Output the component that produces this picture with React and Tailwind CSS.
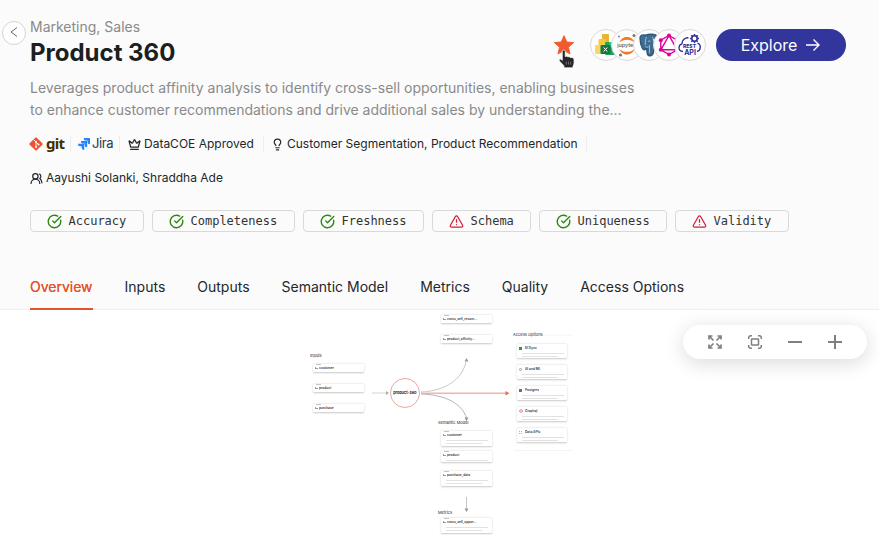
import React from "react";
import { CircleCheckBig, TriangleAlert, Crown, Lightbulb, UsersRound } from "lucide-react";

const circle = "flex size-8 shrink-0 items-center justify-center rounded-full border border-[#d9d9d9] bg-white";

function PowerBi() {
  return (
    <svg width="22" height="24" viewBox="0 0 22 24">
      <rect x="7" y="1" width="7" height="20" rx="1" fill="#e8b62d" />
      <rect x="3.500" y="6" width="7" height="15" rx="1" fill="#f5c945" />
      <rect x="0" y="12" width="7" height="9" rx="1" fill="#f8d766" />
      <rect x="10" y="9" width="10" height="13" rx="1" fill="#21a366" />
      <rect x="14" y="9" width="6" height="5" fill="#33c481" />
      <rect x="5.500" y="12" width="10" height="9" rx="1" fill="#107c41" />
      <path d="M8.700 14.500l3.600 4M12.300 14.500l-3.600 4" stroke="#fff" strokeWidth="1" />
    </svg>
  );
}

function Jupyter() {
  return (
    <svg width="26" height="26" viewBox="0 0 26 26">
      <path d="M5.500 10.500C7 6.500 10 5 13 5s6 1.500 7.500 5.500C18.500 8.500 16 7.700 13 7.700s-5.500.8-7.500 2.800z" fill="#f37726" />
      <path d="M5.500 17C7 21 10 22.500 13 22.500s6-1.500 7.500-5.500c-2 2-4.500 2.800-7.500 2.800S7.500 19 5.500 17z" fill="#f37726" />
      <circle cx="20" cy="3.500" r="1.500" fill="#767677" />
      <circle cx="5" cy="4.500" r="0.900" fill="#767677" />
      <circle cx="6.500" cy="23" r="1.600" fill="#767677" />
      <text x="12.300" y="15.300" textAnchor="middle" fontSize="5.400" fontFamily="Inter, sans-serif" fontWeight="500" fill="#555">jupyter</text>
    </svg>
  );
}

function Postgres() {
  return (
    <svg width="22" height="24" viewBox="0 0 22 24">
      <path d="M2 5C2 2 5 1.500 8 2.200 10 1 15 .8 17.500 2 21 3.500 20.500 7 19 10.500c-.8 2-1.800 3.500-2.400 4.500 1 .6 2.500.2 3.600 0-.8 1.700-2.500 2.400-4.500 2.200-.2 2.500-.5 5.300-3.200 5.600-3 .3-3.400-1.800-3.500-4.500l-.4-3C7 17 5.500 17.500 4.500 15.500 3 12.500 2 8 2 5z" fill="#3f6e95" stroke="#2f5676" strokeWidth="1.400" />
      <path d="M8.500 4C7 6 7.500 10 7.300 12M14 4c2.300 2 2.500 5 1.500 8l1.200 3M10 8.500c1-.8 2.200-.6 2.500.5M11.500 12v8M7.500 13c.5 1.500 2 1.500 3 1" fill="none" stroke="#c9d8e4" strokeWidth=".7" />
      <circle cx="15.500" cy="7" r=".8" fill="#fff" />
    </svg>
  );
}

function GraphQl({ size = 26 }) {
  return (
    <svg width={size} height={size} viewBox="0 0 26 26" fill="none" stroke="#e10098" strokeWidth="1.400">
      <path d="M13 3.500l8.200 4.700v9.600L13 22.500l-8.200-4.700V8.200zM13 3.500L4.800 17.800h16.400z" />
      <g fill="#e10098" stroke="none">
        <circle cx="13" cy="3.500" r="2" />
        <circle cx="21.200" cy="8.200" r="2" />
        <circle cx="21.200" cy="17.800" r="2" />
        <circle cx="13" cy="22.500" r="2" />
        <circle cx="4.800" cy="17.800" r="2" />
        <circle cx="4.800" cy="8.200" r="2" />
      </g>
    </svg>
  );
}

function RestApi() {
  return (
    <svg width="26" height="26" viewBox="0 0 26 26">
      <path d="M6 19.500C3 19.500 1.800 17.500 2 15.500c.2-2 1.500-3.500 3-3.700C5 8 8 5.500 11.500 5.800M20.500 11c2 .8 3 2.300 2.800 4.400-.2 2.300-1.300 3.700-3.300 4.100" fill="none" stroke="#2d2e9b" strokeWidth="1.300" />
      <circle cx="17.500" cy="6.500" r="2.700" fill="none" stroke="#2d2e9b" strokeWidth="1.500" />
      <path d="M17.500 2v1.800M17.500 9.200V11M13 6.500h1.800M20.200 6.500H22M14.300 3.300l1.200 1.200M19.500 8.500l1.200 1.200M20.700 3.300l-1.200 1.200M14.300 9.700l1.200-1.200" stroke="#2d2e9b" strokeWidth="1.500" />
      <text x="12.500" y="15.900" textAnchor="middle" fontSize="5" fontWeight="800" fontFamily="Inter, sans-serif" fill="#2d2e9b">REST</text>
      <text x="13" y="22.500" textAnchor="middle" fontSize="7" fontWeight="700" fontFamily="Inter, sans-serif" fill="#2d2e9b">API</text>
    </svg>
  );
}

function Favourite() {
  return (
    <div className="relative mt-[5px] size-[22px]">
      <svg width="22" height="22" viewBox="0 0 24 24">
        <path d="M12 1.800l3 6.900 7.600.7-5.700 5 1.700 7.400L12 17.900l-6.600 3.900 1.700-7.400-5.700-5 7.600-.7z" fill="#f05a2c" stroke="#f05a2c" strokeLinejoin="round" />
      </svg>
      <svg className="absolute top-[15px] left-[5px]" width="18" height="20" viewBox="0 0 17 19">
        <path d="M4 2.200C4 .6 6.800.6 6.800 2.200v5c1-.7 2.200-.4 2.600.4 1-.6 2-.2 2.400.6 1.500-.5 3.400.2 3.400 1.900v3.200c0 1.200-.7 2-1 3v1.600H5.600v-2L1.300 11.500c-.9-1.400.6-2.500 1.800-1.500l.9.800z" fill="#262626" stroke="#fff" strokeWidth=".7" />
        <path d="M7.800 12v2.800M9.900 12v2.800M12 12v2.800" stroke="#999" strokeWidth=".6" />
      </svg>
    </div>
  );
}

function GitLogo() {
  return (
    <div className="flex w-[34px] items-center">
      <svg className="-ml-[2px] shrink-0" width="16" height="16" viewBox="0 0 16 16">
        <rect x="3" y="3" width="10" height="10" rx="1" fill="#f05033" transform="rotate(45 8 8)" />
        <path d="M5.800 3.800L8 6v5M8 6l2.300 2.300" stroke="#fff" strokeWidth=".9" fill="none" />
        <circle cx="8" cy="5.800" r="1" fill="#fff" />
        <circle cx="8" cy="11" r="1" fill="#fff" />
        <circle cx="10.500" cy="8.400" r="1" fill="#fff" />
      </svg>
      <span className="-mt-[3px] ml-[2px] font-['Noto_Sans',sans-serif] text-[15px] leading-[18px] font-bold tracking-[-0.700px] text-[#413000]">git</span>
    </div>
  );
}

function JiraLogo() {
  return (
    <div className="flex w-[35px] items-center">
      <svg className="-ml-px shrink-0" width="12" height="12" viewBox="0 0 24 24">
        <path d="M11.500 0H23a1 1 0 0 1 1 1v11.500a5 5 0 0 1-5-5V5.200h-2.200a5 5 0 0 1-5.300-5.200z" fill="#2684ff" />
        <path d="M5.800 5.800h11.500a1 1 0 0 1 1 1v11.500a5 5 0 0 1-5.200-5V11h-2.200a5 5 0 0 1-5.100-5.200z" fill="#2684ff" />
        <path d="M0 11.500h11.500a1 1 0 0 1 1 1V24a5 5 0 0 1-5.200-5v-2.300H5.200A5 5 0 0 1 0 11.500z" fill="#2684ff" />
      </svg>
      <span className="ml-[2px] text-[13px] tracking-[-0.400px] text-[#253858]">Jira</span>
    </div>
  );
}

const Divider = () => <span className="h-4 w-px bg-[#eeeeee]" />;

const checks = [
  ["Accuracy", true, "w-[114px]"],
  ["Completeness", true, "w-[143px]"],
  ["Freshness", true, "w-[121px]"],
  ["Schema", false, "w-[99px]"],
  ["Uniqueness", true, "w-[128px]"],
  ["Validity", false, "w-[114px]"],
];

const tabs = ["Overview", "Inputs", "Outputs", "Semantic Model", "Metrics", "Quality", "Access Options"];

function Card({ className, label, lines = 0, icon }) {
  return (
    <div className={"absolute rounded-[1px] bg-white shadow-[0_0.500px_2px_rgba(0,0,0,0.22)] " + className}>
      {!icon && <div className="absolute top-0 left-[3px] h-px w-[5px] bg-[#c4c4c4]" />}
      <div className="flex h-[8px] items-center gap-[1.500px] pl-[2px] text-[#333333]">
        {icon || <span className="size-[2.500px] shrink-0 border-b border-l border-[#999999]" />}
        <span className="w-0 origin-left scale-[0.250] text-[13px] leading-[16px] font-semibold whitespace-nowrap">{label}</span>
      </div>
      {lines > 0 && <div className="mt-px ml-[5px] h-px w-[42px] bg-[#e2e2e2]" />}
      {lines > 1 && <div className="mt-[2px] ml-[5px] h-px w-[36px] bg-[#e2e2e2]" />}
    </div>
  );
}

const Dot = ({ className }) => <span className={"size-[3px] shrink-0 " + className} />;

const heading = "absolute origin-top-left scale-[0.250] text-[16px] leading-[20px] whitespace-nowrap text-[#222222] ";

function Diagram() {
  return (
    <div className="absolute inset-0">
      <svg className="absolute inset-0" width="879" height="225" viewBox="0 310 879 225" fill="none">
        <path d="M372 393h15" stroke="#c8c8c8" strokeWidth=".8" />
        <path d="M386 391l3 2-3 2z" fill="#aaa" />
        <path d="M421 392C446 391 462 379 466 362" stroke="#c8c8c8" strokeWidth="1" />
        <path d="M421 394C447 395 462 404 466.500 418" stroke="#b4b4b4" strokeWidth="1" />
        <path d="M466.500 497v13" stroke="#c4c4c4" strokeWidth="1" />
        <path d="M464.500 361.500l2-3.500 2 3.500zM464.500 417.500l2 4 2-4zM464.500 508.500l2 3.500 2-3.500z" fill="#999" />
        <path d="M421 393.200h86" stroke="#f5b3a5" strokeWidth="1.500" />
        <path d="M505.500 390.900l4 2.300-4 2.300z" fill="#ee6a50" />
        <path d="M541 335h32M514 450.500h59" stroke="#f1f1f1" strokeWidth=".8" />
      </svg>
      <div className="absolute top-[68px] left-[390px] flex size-[30px] items-center justify-center rounded-full border border-[#eba79d] bg-white">
        <span className="shrink-0 scale-[0.250] text-[15px] font-bold whitespace-nowrap text-[#222222]">product-360</span>
      </div>
      <span className={heading + "top-[43px] left-[310px]"}>Inputs</span>
      <span className={heading + "top-[110px] left-[438px]"}>Semantic Model</span>
      <span className={heading + "top-[200px] left-[438px]"}>Metrics</span>
      <span className={heading + "top-[22px] left-[513px]"}>Access Options</span>
      <Card className="top-[54px] left-[313px] h-[8px] w-[51px]" label="customer" />
      <Card className="top-[74px] left-[313px] h-[8px] w-[51px]" label="product" />
      <Card className="top-[94px] left-[313px] h-[8px] w-[51px]" label="purchase" />
      <Card className="top-[5px] left-[441px] h-[8px] w-[51px]" label="cross_sell_recom..." />
      <Card className="top-[25px] left-[441px] h-[8px] w-[51px]" label="product_affinity..." />
      <Card className="top-[121px] left-[441px] h-[15px] w-[51px]" label="customer" lines={2} />
      <Card className="top-[141px] left-[441px] h-[11px] w-[51px]" label="product" lines={1} />
      <Card className="top-[161px] left-[441px] h-[15px] w-[51px]" label="purchase_data" lines={2} />
      <Card className="top-[208px] left-[441px] h-[15px] w-[51px]" label="cross_sell_oppor..." lines={2} />
      <Card className="top-[34px] left-[517px] h-[14px] w-[50px]" label="BI Sync" lines={2} icon={<Dot className="mr-[1px] bg-[#3c9a35]" />} />
      <Card className="top-[55px] left-[517px] h-[14px] w-[50px]" label="AI and ML" lines={2} icon={<Dot className="mr-[1px] rounded-full border-[0.500px] border-[#999999]" />} />
      <Card className="top-[76px] left-[517px] h-[14px] w-[50px]" label="Postgres" lines={2} icon={<Dot className="mr-[1px] bg-[#55788f]" />} />
      <Card className="top-[97px] left-[517px] h-[14px] w-[50px]" label="Graphql" lines={2} icon={<GraphQl size={4} />} />
      <Card className="top-[118px] left-[517px] h-[14px] w-[50px]" label="Data APIs" lines={2} icon={<Dot className="mr-[1px] border border-dotted border-[#aaaacc]" />} />
    </div>
  );
}

function ZoomBar() {
  return (
    <div className="absolute top-[15px] left-[683px] flex h-[34px] w-[184px] items-center justify-between rounded-full bg-white px-[22px] text-[#808080] shadow-[0_4px_20px_rgba(0,0,0,0.15)]">
      <svg width="20" height="20" viewBox="0 0 20 20" fill="none" stroke="currentColor" strokeWidth="1.700">
        <path d="M4 7.500V4H7.500M4 4l4.500 4.500M12.500 4H16V7.500M16 4l-4.500 4.500M4 12.500V16H7.500M4 16l4.500-4.500M12.500 16H16V12.500M16 16l-4.500-4.500" />
      </svg>
      <svg width="20" height="20" viewBox="0 0 20 20" fill="none" stroke="currentColor" strokeWidth="1.500">
        <path d="M3.700 7V5.700a2 2 0 0 1 2-2H7M13 3.700h1.300a2 2 0 0 1 2 2V7M16.300 13v1.300a2 2 0 0 1-2 2H13M7 16.300H5.700a2 2 0 0 1-2-2V13" />
        <rect x="6.500" y="7" width="7" height="6" rx=".5" />
      </svg>
      <svg width="20" height="20" viewBox="0 0 20 20" stroke="currentColor" strokeWidth="2"><path d="M3 10h14" /></svg>
      <svg width="20" height="20" viewBox="0 0 20 20" stroke="currentColor" strokeWidth="2"><path d="M3 10h14M10 3v14" /></svg>
    </div>
  );
}

export default function App() {
  return (
    <div className="flex h-[535px] w-[879px] flex-col overflow-hidden bg-white font-['Inter',sans-serif] text-[#22272b]">
      <header className="flex h-[310px] shrink-0 flex-col border-b border-[#eeeeee] bg-[#fbfbfb]">
        <div className="flex h-[125px] pt-4 pl-[2px]">
          <button className="mt-[5px] flex size-6 shrink-0 items-center justify-center rounded-full border border-[#d5d5d5] bg-white">
            <svg width="8" height="12" viewBox="0 0 8 12" fill="none" stroke="#666" strokeWidth="1"><path d="M7 .5L1 5l6 4.500" /></svg>
          </button>
          <div className="ml-1 w-[615px] shrink-0">
            <p className="text-[14px] leading-[22px] text-[#8a8a8a]">Marketing, Sales</p>
            <h1 className="text-[24px] leading-[30px] font-bold text-[#1c1f21]">Product 360</h1>
            <p className="mt-[9px] text-[14px] leading-[22px] whitespace-nowrap text-[#8a8a8a]">
              Leverages product affinity analysis to identify cross-sell opportunities, enabling businesses
              <br />
              to enhance customer recommendations and drive additional sales by understanding the...
            </p>
          </div>
          <div className="-ml-[92px] flex h-8 items-start pt-[13px]">
            <Favourite />
            <div className="ml-[15px] flex">
              <span className={circle}><PowerBi /></span>
              <span className={circle + " -ml-[11px]"}><Jupyter /></span>
              <span className={circle + " -ml-[10px]"}><Postgres /></span>
              <span className={circle + " -ml-[12px]"}><GraphQl /></span>
              <span className={circle + " -ml-[11px]"}><RestApi /></span>
            </div>
            <button className="ml-[10px] flex h-8 w-[130px] items-center justify-center gap-2 rounded-full bg-[#31359c] text-[16px] text-white">
              Explore
              <svg width="16" height="16" viewBox="0 0 16 16" fill="none" stroke="currentColor" strokeWidth="1.400"><path d="M1 8h13M8.500 2.500L14 8l-5.500 5.500" /></svg>
            </button>
          </div>
        </div>
        <div className="flex h-[69px] flex-col pt-px pl-[30px] text-[12px]">
          <div className="flex h-9 items-center">
            <GitLogo />
            <span className="ml-[6px] flex"><Divider /></span>
            <span className="ml-[8px] flex"><JiraLogo /></span>
            <span className="ml-[5px] flex"><Divider /></span>
            <span className="ml-[8px] flex w-[127px] items-center gap-[3px] whitespace-nowrap"><Crown className="shrink-0" size={13} strokeWidth={2.400} />DataCOE Approved</span>
            <span className="ml-[8px] flex"><Divider /></span>
            <span className="ml-[7px] flex w-[308px] items-center gap-[3px] whitespace-nowrap"><Lightbulb className="shrink-0" size={13} strokeWidth={2.200} />Customer Segmentation, Product Recommendation</span>
            <span className="ml-[7px] flex"><Divider /></span>
          </div>
          <div className="flex h-[32px] items-center gap-[3px]"><UsersRound size={13} strokeWidth={2.200} />Aayushi Solanki, Shraddha Ade</div>
        </div>
        <div className="mt-4 flex h-[22px] gap-2 pl-[30px]">
          {checks.map(([name, ok, w]) => (
            <div key={name} className={"flex items-center rounded border border-[#d9d9d9] pl-[15.500px] font-['DejaVu_Sans_Mono',monospace] text-[12px] text-[#333333] " + w}>
              {ok ? <CircleCheckBig className="mr-[7px] shrink-0" size={15} color="#2f8512" strokeWidth={2.200} /> : <TriangleAlert className="mr-[7px] shrink-0" size={15} color="#cf1f35" />}
              {name}
            </div>
          ))}
        </div>
        <nav className="mt-auto flex gap-8 pl-[30px] text-[14px]">
          {tabs.map((t, i) => (
            <span key={t} className={"flex h-[46px] items-center whitespace-nowrap " + (i === 0 ? "relative z-10 -mb-px h-[47px] border-b-2 border-[#e5532d] pt-px text-[#e5532d] [text-shadow:0_0_0.250px_currentcolor]" : "")}>{t}</span>
          ))}
        </nav>
      </header>
      <main className="relative flex-1 bg-white">
        <Diagram />
        <ZoomBar />
      </main>
    </div>
  );
}
